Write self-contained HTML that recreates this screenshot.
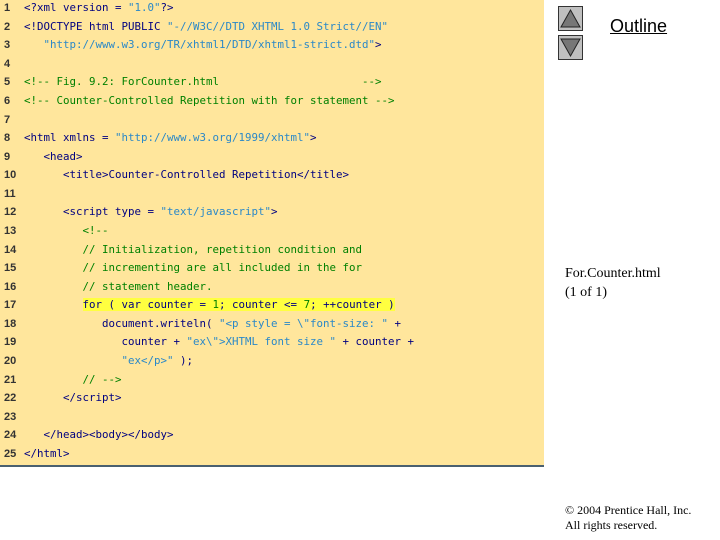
<!DOCTYPE html>
<html><head><meta charset="utf-8"><style>
body{margin:0;width:720px;height:540px;background:#fff;position:relative;overflow:hidden;font-family:"Liberation Sans",sans-serif}
#code{position:absolute;left:0;top:0;width:544px;height:465px;background:#ffe69c;border-bottom:2px solid #4a6070}
.l{position:absolute;left:0;height:18px;font-family:"DejaVu Sans Mono","Liberation Mono",monospace;font-size:10.8px;line-height:18px;white-space:pre;color:#1a1a60;margin-top:1px}
.n{position:absolute;left:4px;color:#333;font-family:"Liberation Sans",sans-serif;font-size:11px;font-weight:bold}
.c{position:absolute;left:24px}
.t{color:#000080}.s{color:#2a88c8}.g{color:#008000}.k{color:#000080}
.hl{background:#ffff40}
.btn{position:absolute;left:558px;width:23px;height:23px;background:#c0c0c0;border:1px solid #333}
#o{position:absolute;left:610px;top:16px;font-size:18px;text-decoration:underline;color:#000}
.r{position:absolute;left:565px;font-family:"Liberation Serif",serif;color:#000}
</style></head><body>
<div id="code">
<div class="l" style="top:-2px"><span class="n">1</span><span class="c"><span class="t">&lt;?xml version = </span><span class="s">"1.0"</span><span class="t">?&gt;</span></span></div>
<div class="l" style="top:16.6px"><span class="n">2</span><span class="c"><span class="t">&lt;!DOCTYPE html PUBLIC </span><span class="s">"-//W3C//DTD XHTML 1.0 Strict//EN"</span></span></div>
<div class="l" style="top:35.2px"><span class="n">3</span><span class="c"><span class="s">   "http://www.w3.org/TR/xhtml1/DTD/xhtml1-strict.dtd"</span><span class="t">&gt;</span></span></div>
<div class="l" style="top:53.7px"><span class="n">4</span></div>
<div class="l" style="top:72.3px"><span class="n">5</span><span class="c g">&lt;!-- Fig. 9.2: ForCounter.html                      --&gt;</span></div>
<div class="l" style="top:90.9px"><span class="n">6</span><span class="c g">&lt;!-- Counter-Controlled Repetition with for statement --&gt;</span></div>
<div class="l" style="top:109.5px"><span class="n">7</span></div>
<div class="l" style="top:128.1px"><span class="n">8</span><span class="c"><span class="t">&lt;html xmlns = </span><span class="s">"http://www.w3.org/1999/xhtml"</span><span class="t">&gt;</span></span></div>
<div class="l" style="top:146.6px"><span class="n">9</span><span class="c t">   &lt;head&gt;</span></div>
<div class="l" style="top:165.2px"><span class="n">10</span><span class="c t">      &lt;title&gt;Counter-Controlled Repetition&lt;/title&gt;</span></div>
<div class="l" style="top:183.8px"><span class="n">11</span></div>
<div class="l" style="top:202.4px"><span class="n">12</span><span class="c"><span class="t">      &lt;script type = </span><span class="s">"text/javascript"</span><span class="t">&gt;</span></span></div>
<div class="l" style="top:221px"><span class="n">13</span><span class="c g">         &lt;!--</span></div>
<div class="l" style="top:239.5px"><span class="n">14</span><span class="c g">         // Initialization, repetition condition and</span></div>
<div class="l" style="top:258.1px"><span class="n">15</span><span class="c g">         // incrementing are all included in the for</span></div>
<div class="l" style="top:276.7px"><span class="n">16</span><span class="c g">         // statement header.</span></div>
<div class="l" style="top:295.3px"><span class="n">17</span><span class="c">         <span class="hl k">for ( var counter = <span class="g">1</span>; counter &lt;= <span class="g">7</span>; ++counter )</span></span></div>
<div class="l" style="top:313.9px"><span class="n">18</span><span class="c"><span class="k">            document.writeln( </span><span class="s">"&lt;p style = \"font-size: "</span><span class="k"> +</span></span></div>
<div class="l" style="top:332.4px"><span class="n">19</span><span class="c"><span class="k">               counter + </span><span class="s">"ex\"&gt;XHTML font size "</span><span class="k"> + counter +</span></span></div>
<div class="l" style="top:351px"><span class="n">20</span><span class="c"><span class="s">               "ex&lt;/p&gt;"</span><span class="k"> );</span></span></div>
<div class="l" style="top:369.6px"><span class="n">21</span><span class="c g">         // --&gt;</span></div>
<div class="l" style="top:388.2px"><span class="n">22</span><span class="c t">      &lt;/script&gt;</span></div>
<div class="l" style="top:406.8px"><span class="n">23</span></div>
<div class="l" style="top:425.3px"><span class="n">24</span><span class="c t">   &lt;/head&gt;&lt;body&gt;&lt;/body&gt;</span></div>
<div class="l" style="top:443.9px"><span class="n">25</span><span class="c t">&lt;/html&gt;</span></div>
</div>
<div class="btn" style="top:6px"><svg width="23" height="23"><polygon points="11.5,3 21,20 2,20" fill="#777" stroke="#222" stroke-width="1"/></svg></div>
<div class="btn" style="top:35px"><svg width="23" height="23"><polygon points="2,3 21,3 11.5,20" fill="#777" stroke="#222" stroke-width="1"/></svg></div>
<div id="o">Outline</div>
<div class="r" style="top:264px;font-size:14px;line-height:19px">For.Counter.html<br>(1 of 1)</div>
<div class="r" style="top:503px;font-size:12px;line-height:15px">© 2004 Prentice Hall, Inc.<br>All rights reserved.</div>
</body></html>
